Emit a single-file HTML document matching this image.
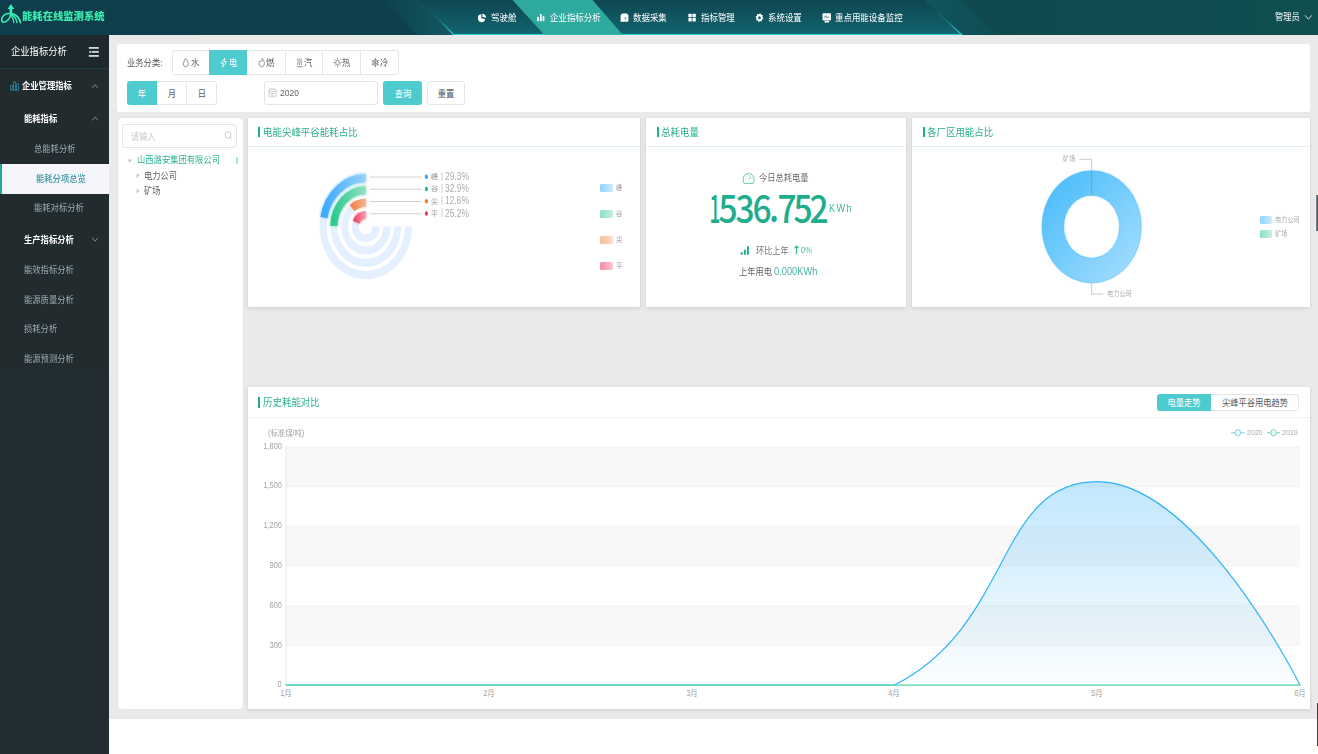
<!DOCTYPE html>
<html lang="zh-CN"><head><meta charset="utf-8"><title>能耗在线监测系统</title><style>
html,body{margin:0;padding:0}
body{width:1318px;height:754px;overflow:hidden;position:relative;background:#fff;
font-family:"Liberation Sans", "Noto Sans CJK SC", sans-serif;}
.b{position:absolute;box-sizing:border-box;display:block}
.t{position:absolute;white-space:nowrap;line-height:1;display:block}
</style></head><body>
<div class="b" style="left:109.00px;top:35.00px;width:1209.00px;height:684.00px;background:#eaeaea"></div>
<svg class="b" style="left:0.00px;top:0.00px;" width="1318.00" height="35.00" viewBox="0 0 1318.00 35.00">
<defs>
<linearGradient id="hb" x1="0" x2="1" y1="0" y2="0"><stop offset="0" stop-color="#0e3e4b"/><stop offset="0.3" stop-color="#0e404b"/><stop offset="1" stop-color="#104e50"/></linearGradient>
<linearGradient id="hc" x1="0" x2="0" y1="0" y2="1"><stop offset="0" stop-color="#0f4651" stop-opacity="1"/><stop offset="1" stop-color="#11656f"/></linearGradient>
<linearGradient id="hl" x1="0" x2="1" y1="0" y2="0"><stop offset="0" stop-color="#12616b" stop-opacity="0"/><stop offset="1" stop-color="#12616b" stop-opacity="0.75"/></linearGradient>
<linearGradient id="hr" x1="0" x2="1" y1="0" y2="0"><stop offset="0" stop-color="#12616b" stop-opacity="0.55"/><stop offset="1" stop-color="#12616b" stop-opacity="0.15"/></linearGradient>
<linearGradient id="hs" x1="0" x2="0" y1="0" y2="1"><stop offset="0" stop-color="#22c8c8" stop-opacity="0"/><stop offset="0.3" stop-color="#22c8c8" stop-opacity="0.02"/><stop offset="0.6" stop-color="#22c8c8" stop-opacity="0.22"/><stop offset="1" stop-color="#2ad6d6" stop-opacity="1"/></linearGradient>
</defs>
<rect width="1318" height="35" fill="url(#hb)"/>
<polygon points="419.3,0 924.5,0 962,35 454,35" fill="url(#hc)"/>
<polygon points="383,0 419.3,0 454,35 417.7,35" fill="url(#hl)"/>
<polygon points="924.5,0 960.5,0 998,35 962,35" fill="url(#hr)"/>
<line x1="419.3" y1="0" x2="454" y2="35" stroke="url(#hs)" stroke-width="1.3"/>
<line x1="924.5" y1="0" x2="962" y2="35" stroke="url(#hs)" stroke-width="1.3"/>
<rect x="453.5" y="33.9" width="508.5" height="1.1" fill="#2ccaca"/>
<polygon points="512.5,0 592.5,0 622.5,34.5 544,34.5" fill="#2ea99e"/>

<g fill="none" stroke="#38efb6" stroke-linecap="round">
<polygon points="10.9,3.9 14.2,8.9 7.6,8.9" fill="#38efb6" stroke="none"/>
<path d="M10.9 8 L10.9 14" stroke-width="2.6" stroke-linecap="butt"/>
<path d="M10.9 13.5 C9.8 19.5 6.5 22.2 3.8 22.2 C1.2 22.2 1 18.6 3 16.2 C5 13.8 8.5 13.4 10.9 13.6" stroke-width="1.5"/>
<path d="M11.2 13.6 C15.5 14.2 19.3 17.5 20.4 22.6" stroke-width="1.7"/>
<path d="M11.4 15.2 C14.6 16 16.4 18.8 16.9 22.6" stroke-width="1.4"/>
<path d="M11.4 16.8 C13 17.8 13.6 20 13.7 22.6" stroke-width="1.3"/>
</g>

<g fill="#fff">
<!-- pie -->
<path d="M481.3 14.2 A3.7 4 0 1 0 485.2 19.2 L481.3 18.2 Z"/>
<path d="M482.3 13.7 A3.8 4 0 0 1 486.1 17.8 L482.3 17 Z"/>
<!-- bars -->
<rect x="537.1" y="17" width="1.8" height="4.2"/><rect x="539.9" y="14" width="1.8" height="7.2"/><rect x="542.6" y="16.2" width="1.8" height="5"/>
<!-- box -->
<path d="M622 13.5 H627 L628.4 15.6 V21.8 H620.6 V15.6 Z"/>
<!-- grid -->
<rect x="688.4" y="13.8" width="3.3" height="3.5" rx="0.4"/><rect x="692.5" y="13.8" width="3.3" height="3.5" rx="0.4"/>
<rect x="688.4" y="18" width="3.3" height="3.5" rx="0.4"/><rect x="692.5" y="18" width="3.3" height="3.5" rx="0.4"/>
<!-- monitor -->
<path d="M823.3 13.2 H830.2 Q831 13.2 831 14 V19.6 Q831 20.4 830.2 20.4 H823.3 Q822.5 20.4 822.5 19.6 V14 Q822.5 13.2 823.3 13.2 Z M824.6 21 H828.9 V22.4 H824.6 Z"/>
</g>
<path d="M624.3 17.6 h0.8 v1.4 h0.8 v-1 h0.8" stroke="#19656f" stroke-width="0.5" fill="none"/>
<path d="M824 17 h1.3 l0.8 -1.4 l1 2.6 l0.8 -1.2 h1.4" stroke="#19656f" stroke-width="0.6" fill="none"/>
<polygon points="763.49,18.60 762.00,19.59 761.76,21.52 760.09,21.03 758.71,22.21 757.83,20.53 756.12,20.26 756.55,18.36 755.51,16.80 757.00,15.81 757.24,13.88 758.91,14.37 760.29,13.19 761.17,14.87 762.88,15.14 762.45,17.04" fill="#fff"/><ellipse cx="759.50" cy="17.70" rx="1.35" ry="1.5" fill="#14606b"/><path d="M1305 15.3 L1308.4 19.2 L1311.8 15.3" stroke="#dfe9ea" stroke-width="0.9" fill="none"/></svg>
<span class="t" style="top:12.25px;left:22.00px;transform-origin:0 50%;transform:scaleX(1.0450);font-size:9.90px;color:#3aeeb0;font-weight:900;">能耗在线监测系统</span>
<span class="t" style="top:13.12px;left:490.80px;transform-origin:0 50%;transform:scaleX(0.8850);font-size:9.55px;color:#fff;">驾驶舱</span>
<span class="t" style="top:13.12px;left:549.80px;transform-origin:0 50%;transform:scaleX(0.8850);font-size:9.55px;color:#fff;">企业指标分析</span>
<span class="t" style="top:13.12px;left:633.00px;transform-origin:0 50%;transform:scaleX(0.8850);font-size:9.55px;color:#fff;">数据采集</span>
<span class="t" style="top:13.12px;left:701.00px;transform-origin:0 50%;transform:scaleX(0.8850);font-size:9.55px;color:#fff;">指标管理</span>
<span class="t" style="top:13.12px;left:767.60px;transform-origin:0 50%;transform:scaleX(0.8850);font-size:9.55px;color:#fff;">系统设置</span>
<span class="t" style="top:13.12px;left:834.90px;transform-origin:0 50%;transform:scaleX(0.8850);font-size:9.55px;color:#fff;">重点用能设备监控</span>
<span class="t" style="top:13.15px;left:1274.70px;transform-origin:0 50%;transform:scaleX(0.8850);font-size:9.30px;color:#fff;">管理员</span>
<div class="b" style="left:0.00px;top:35.00px;width:109.00px;height:719.00px;background:#212d33"></div>
<div class="b" style="left:0.00px;top:68.00px;width:109.00px;height:305.00px;background:#222b2e"></div>
<div class="b" style="left:0.00px;top:35.00px;width:109.00px;height:34.00px;background:#1e292e;border-bottom:1px solid #203c45"></div>
<span class="t" style="top:46.05px;left:10.90px;transform-origin:0 50%;transform:scaleX(0.8850);font-size:10.50px;color:#fff;">企业指标分析</span>
<svg class="b" style="left:0.00px;top:0.00px;" width="109.00" height="400.00" viewBox="0 0 109.00 400.00">
<g fill="#cfd9e0">
<rect x="88.8" y="47" width="10" height="1.8"/>
<rect x="91.6" y="51" width="7.2" height="1.8"/>
<rect x="88.8" y="55" width="10" height="1.8"/>
<polygon points="88.6,51.9 90.8,50.4 90.8,53.4"/>
</g>
<g fill="none" stroke="#2c7f99" stroke-width="0.9">
<rect x="10.6" y="85.6" width="2" height="4.6"/><rect x="13.6" y="82" width="2" height="8.2"/><rect x="16.6" y="84" width="2" height="6.2"/>
</g>
<g fill="none" stroke="#848f95" stroke-width="0.9">
<path d="M92.2 88 L95.1 84.6 L98 88"/>
<path d="M92.2 120.4 L95.1 117 L98 120.4"/>
<path d="M92.2 237.8 L95.1 241.2 L98 237.8"/>
</g>
</svg>
<span class="t" style="top:81.30px;left:21.80px;transform-origin:0 50%;transform:scaleX(0.8850);font-size:9.40px;color:#fff;font-weight:700;">企业管理指标</span>
<span class="t" style="top:113.80px;left:23.60px;transform-origin:0 50%;transform:scaleX(0.8850);font-size:9.40px;color:#fff;font-weight:700;">能耗指标</span>
<span class="t" style="top:144.00px;left:34.30px;transform-origin:0 50%;transform:scaleX(0.8850);font-size:9.40px;color:#9babb5;">总能耗分析</span>
<div class="b" style="left:0.00px;top:164.00px;width:109.00px;height:30.00px;background:#f4f6fb;border-left:2px solid #26a69a"></div>
<span class="t" style="top:173.50px;left:36.40px;transform-origin:0 50%;transform:scaleX(0.8850);font-size:9.40px;color:#3d97a3;font-weight:500;">能耗分项总览</span>
<span class="t" style="top:202.90px;left:34.30px;transform-origin:0 50%;transform:scaleX(0.8850);font-size:9.40px;color:#9babb5;">能耗对标分析</span>
<span class="t" style="top:234.70px;left:23.60px;transform-origin:0 50%;transform:scaleX(0.8850);font-size:9.40px;color:#fff;font-weight:700;">生产指标分析</span>
<span class="t" style="top:265.30px;left:23.60px;transform-origin:0 50%;transform:scaleX(0.8850);font-size:9.40px;color:#9babb5;">能效指标分析</span>
<span class="t" style="top:294.70px;left:23.60px;transform-origin:0 50%;transform:scaleX(0.8850);font-size:9.40px;color:#9babb5;">能源质量分析</span>
<span class="t" style="top:324.30px;left:23.60px;transform-origin:0 50%;transform:scaleX(0.8850);font-size:9.40px;color:#9babb5;">损耗分析</span>
<span class="t" style="top:353.80px;left:23.60px;transform-origin:0 50%;transform:scaleX(0.8850);font-size:9.40px;color:#9babb5;">能源预测分析</span>
<div class="b" style="left:117.00px;top:44.00px;width:1193.00px;height:68.00px;background:#fff;border-radius:3px"></div>
<span class="t" style="top:57.70px;left:126.80px;transform-origin:0 50%;transform:scaleX(0.8850);font-size:9.40px;color:#555;">业务分类:</span>
<div class="b" style="left:172.00px;top:50.00px;width:227.00px;height:25.00px;border:1px solid #e2e5ec;border-radius:3px;background:#fff"></div>
<div class="b" style="left:209.00px;top:50.00px;width:38.00px;height:25.00px;background:#4ecbcf"></div>
<div class="b" style="left:285.00px;top:51.00px;width:1.00px;height:23.00px;background:#e2e5ec"></div>
<div class="b" style="left:322.00px;top:51.00px;width:1.00px;height:23.00px;background:#e2e5ec"></div>
<div class="b" style="left:360.00px;top:51.00px;width:1.00px;height:23.00px;background:#e2e5ec"></div>
<span class="t" style="top:58.00px;left:190.70px;transform-origin:0 50%;transform:scaleX(0.8850);font-size:9.40px;color:#5a5d63;">水</span>
<span class="t" style="top:58.00px;left:228.55px;transform-origin:0 50%;transform:scaleX(0.8850);font-size:9.40px;color:#fff;">电</span>
<span class="t" style="top:58.00px;left:266.40px;transform-origin:0 50%;transform:scaleX(0.8850);font-size:9.40px;color:#5a5d63;">燃</span>
<span class="t" style="top:58.00px;left:304.25px;transform-origin:0 50%;transform:scaleX(0.8850);font-size:9.40px;color:#5a5d63;">汽</span>
<span class="t" style="top:58.00px;left:342.10px;transform-origin:0 50%;transform:scaleX(0.8850);font-size:9.40px;color:#5a5d63;">热</span>
<span class="t" style="top:58.00px;left:379.95px;transform-origin:0 50%;transform:scaleX(0.8850);font-size:9.40px;color:#5a5d63;">冷</span>
<div class="b" style="left:127.00px;top:81.00px;width:90.00px;height:24.00px;border:1px solid #e2e5ec;border-radius:3px;background:#fff"></div>
<div class="b" style="left:127.00px;top:81.00px;width:30.00px;height:24.00px;background:#4ecbcf;border-radius:3px 0 0 3px"></div>
<div class="b" style="left:186.00px;top:82.00px;width:1.00px;height:22.00px;background:#e2e5ec"></div>
<span class="t" style="top:88.50px;left:141.93px;transform-origin:0 50%;transform:scaleX(0.8850) translateX(-50%);font-size:9.40px;color:#fff;">年</span>
<span class="t" style="top:88.50px;left:171.80px;transform-origin:0 50%;transform:scaleX(0.8850) translateX(-50%);font-size:9.40px;color:#5a5d63;">月</span>
<span class="t" style="top:88.50px;left:201.67px;transform-origin:0 50%;transform:scaleX(0.8850) translateX(-50%);font-size:9.40px;color:#5a5d63;">日</span>
<div class="b" style="left:264.00px;top:81.00px;width:114.00px;height:24.00px;border:1px solid #e2e5ec;border-radius:3px;background:#fff"></div>
<span class="t" style="top:88.40px;left:279.60px;transform-origin:0 50%;transform:scaleX(0.8850);font-size:9.60px;color:#606266;">2020</span>
<div class="b" style="left:383.00px;top:81.00px;width:39.00px;height:24.00px;background:#4ecbcf;border-radius:3px"></div>
<span class="t" style="top:89.10px;left:402.50px;transform-origin:0 50%;transform:scaleX(0.8850) translateX(-50%);font-size:9.40px;color:#fff;">查询</span>
<div class="b" style="left:427.00px;top:81.00px;width:38.00px;height:24.00px;border:1px solid #e2e5ec;border-radius:3px;background:#fff"></div>
<span class="t" style="top:89.10px;left:446.20px;transform-origin:0 50%;transform:scaleX(0.8850) translateX(-50%);font-size:9.40px;color:#4a4d52;">重置</span>
<svg class="b" style="left:0.00px;top:0.00px;" width="480.00" height="112.00" viewBox="0 0 480.00 112.00"><g fill="none" stroke="#6d7076" stroke-width="0.75" stroke-linejoin="round"><path d="M185.80 58.30 C182.60 62.10 182.90 66.80 185.80 66.80 C188.70 66.80 189.00 62.10 185.80 58.30 Z"/><path d="M262.10 58.40 C265.20 61.00 265.00 66.80 261.80 66.80 C258.60 66.80 258.40 62.40 260.20 60.80 C260.60 62.20 262.40 62.00 262.10 58.40 Z"/><path d="M297.85 58.40 q-0.9 1.1 0 2.2 q0.9 1.1 0 2.2 q-0.9 1.1 0 2.2"/><path d="M299.65 58.40 q-0.9 1.1 0 2.2 q0.9 1.1 0 2.2 q-0.9 1.1 0 2.2"/><path d="M301.45 58.40 q-0.9 1.1 0 2.2 q0.9 1.1 0 2.2 q-0.9 1.1 0 2.2"/><path d="M296.65 66.80 h6"/><ellipse cx="337.50" cy="62.60" rx="1.9" ry="2.1"/><path d="M340.07 62.60 L341.66 62.60"/><path d="M339.31 64.65 L340.44 65.92"/><path d="M337.50 65.50 L337.50 67.30"/><path d="M335.69 64.65 L334.56 65.92"/><path d="M334.93 62.60 L333.34 62.60"/><path d="M335.69 60.55 L334.56 59.28"/><path d="M337.50 59.70 L337.50 57.90"/><path d="M339.31 60.55 L340.44 59.28"/><path d="M375.35 62.60 L375.35 67.30"/><path d="M375.35 62.60 L371.75 64.95"/><path d="M375.35 62.60 L371.75 60.25"/><path d="M375.35 62.60 L375.35 57.90"/><path d="M375.35 62.60 L378.95 60.25"/><path d="M375.35 62.60 L378.95 64.95"/><ellipse cx="375.35" cy="62.60" rx="2.6" ry="2.9"/></g><path d="M224.95 58.00 L221.15 63.20 L223.55 63.20 L222.35 67.20 L226.55 61.60 L224.05 61.60 Z" fill="none" stroke="#fff" stroke-width="0.8" stroke-linejoin="round"/><g fill="none" stroke="#c0c4cc" stroke-width="0.8"><rect x="269" y="89.2" width="7.2" height="7.6" rx="0.6"/><path d="M269 91.6 h7.2 M270.9 88.2 v1.8 M274.3 88.2 v1.8 M270.6 93.4 h4 M270.6 95 h4" /></g></svg>
<div class="b" style="left:118.00px;top:118.00px;width:125.00px;height:591.00px;background:#fff;border-radius:4px;box-shadow:0 0 3px rgba(0,0,0,.06)"></div>
<div class="b" style="left:122.00px;top:124.00px;width:115.00px;height:24.00px;border:1px solid #e2e5ec;border-radius:3px;background:#fff"></div>
<span class="t" style="top:132.70px;left:130.80px;transform-origin:0 50%;transform:scaleX(0.8850);font-size:9.20px;color:#c3c7cf;">请输入</span>
<svg class="b" style="left:0.00px;top:0.00px;" width="245.00" height="200.00" viewBox="0 0 245.00 200.00">
<g fill="none" stroke="#c0c4cc" stroke-width="0.8"><ellipse cx="228" cy="135" rx="3" ry="3.4"/><path d="M230.2 137.6 L231.6 139.3"/></g>
<g fill="#c0c4cc"><polygon points="127.6,159.4 132,159.4 129.8,162.6"/><polygon points="136.6,172.9 139.3,175.6 136.6,178.3"/><polygon points="136.6,188.2 139.3,190.9 136.6,193.6"/></g>
<rect x="236.4" y="157" width="1.3" height="7" fill="#7fd6bd"/>
</svg>
<span class="t" style="top:155.10px;left:137.00px;transform-origin:0 50%;transform:scaleX(0.8850);font-size:9.40px;color:#2fb392;">山西潞安集团有限公司</span>
<span class="t" style="top:172.45px;left:144.20px;transform-origin:0 50%;transform:scaleX(0.8850);font-size:9.30px;color:#606266;">电力公司</span>
<span class="t" style="top:187.35px;left:144.20px;transform-origin:0 50%;transform:scaleX(0.8850);font-size:9.30px;color:#606266;">矿场</span>
<div class="b" style="left:248.00px;top:118.00px;width:392.00px;height:189.00px;background:#fff;box-shadow:0 1px 4px rgba(0,0,0,.13)"></div>
<div class="b" style="left:258.00px;top:127.00px;width:2.00px;height:10.00px;background:#1fae8c"></div>
<span class="t" style="top:126.75px;left:262.90px;transform-origin:0 50%;transform:scaleX(0.8850);font-size:10.70px;color:#2bb092;">电能尖峰平谷能耗占比</span>
<div class="b" style="left:248.00px;top:146.00px;width:392.00px;height:1.00px;background:#dff2f0"></div>
<div class="b" style="left:646.00px;top:118.00px;width:260.00px;height:189.00px;background:#fff;box-shadow:0 1px 4px rgba(0,0,0,.13)"></div>
<div class="b" style="left:657.00px;top:127.00px;width:2.00px;height:10.00px;background:#1fae8c"></div>
<span class="t" style="top:126.75px;left:661.40px;transform-origin:0 50%;transform:scaleX(0.8850);font-size:10.70px;color:#2bb092;">总耗电量</span>
<div class="b" style="left:646.00px;top:146.00px;width:260.00px;height:1.00px;background:#dff2f0"></div>
<div class="b" style="left:912.00px;top:118.00px;width:398.00px;height:189.00px;background:#fff;box-shadow:0 1px 4px rgba(0,0,0,.13)"></div>
<div class="b" style="left:923.00px;top:127.00px;width:2.00px;height:10.00px;background:#1fae8c"></div>
<span class="t" style="top:126.75px;left:927.30px;transform-origin:0 50%;transform:scaleX(0.8850);font-size:10.70px;color:#2bb092;">各厂区用能占比</span>
<div class="b" style="left:912.00px;top:146.00px;width:398.00px;height:1.00px;background:#dff2f0"></div>
<svg class="b" style="left:0.00px;top:0.00px;" width="640.00" height="300.00" viewBox="0 0 640.00 300.00"><defs><filter id="gl" x="-30%" y="-30%" width="160%" height="160%"><feGaussianBlur stdDeviation="1.6"/></filter><linearGradient id="rg0" gradientUnits="userSpaceOnUse" x1="-50.00" y1="0" x2="0" y2="0"><stop offset="0" stop-color="#3ba9f9"/><stop offset="1" stop-color="#97d4fc"/></linearGradient><linearGradient id="rg1" gradientUnits="userSpaceOnUse" x1="-38.00" y1="0" x2="0" y2="0"><stop offset="0" stop-color="#2bc88b"/><stop offset="1" stop-color="#93e2c4"/></linearGradient><linearGradient id="rg2" gradientUnits="userSpaceOnUse" x1="-17.00" y1="0" x2="0" y2="0"><stop offset="0" stop-color="#ef8045"/><stop offset="1" stop-color="#f4b691"/></linearGradient><linearGradient id="rg3" gradientUnits="userSpaceOnUse" x1="-13.00" y1="0" x2="0" y2="0"><stop offset="0" stop-color="#ee4565"/><stop offset="1" stop-color="#f7a3b6"/></linearGradient></defs><g transform="translate(365.80 226.60) scale(0.878 1)" fill="none"><path d="M-0.00 -48.55 A48.55 48.55 0 1 0 48.55 0.00" stroke="#e4f0ff" stroke-width="8.10"/><path d="M-0.00 -36.30 A36.30 36.30 0 1 0 36.30 0.00" stroke="#e4f0ff" stroke-width="8.10"/><path d="M-0.00 -24.05 A24.05 24.05 0 1 0 24.05 0.00" stroke="#e4f0ff" stroke-width="8.10"/><path d="M-0.00 -11.80 A11.80 11.80 0 1 0 11.80 0.00" stroke="#e4f0ff" stroke-width="8.10"/><path d="M-0.00 -48.55 A48.55 48.55 0 0 0 -47.67 -9.18" stroke="#3ba9f9" stroke-width="9.10" opacity="0.55" filter="url(#gl)"/><path d="M-0.00 -48.55 A48.55 48.55 0 0 0 -47.67 -9.18" stroke="url(#rg0)" stroke-width="8.10"/><path d="M-0.00 -36.30 A36.30 36.30 0 0 0 -36.29 -0.76" stroke="#2bc88b" stroke-width="9.10" opacity="0.55" filter="url(#gl)"/><path d="M-0.00 -36.30 A36.30 36.30 0 0 0 -36.29 -0.76" stroke="url(#rg1)" stroke-width="8.10"/><path d="M-0.00 -24.05 A24.05 24.05 0 0 0 -15.46 -18.42" stroke="#ef8045" stroke-width="9.10" opacity="0.55" filter="url(#gl)"/><path d="M-0.00 -24.05 A24.05 24.05 0 0 0 -15.46 -18.42" stroke="url(#rg2)" stroke-width="8.10"/><path d="M-0.00 -11.80 A11.80 11.80 0 0 0 -10.94 -4.42" stroke="#ee4565" stroke-width="9.10" opacity="0.55" filter="url(#gl)"/><path d="M-0.00 -11.80 A11.80 11.80 0 0 0 -10.94 -4.42" stroke="url(#rg3)" stroke-width="8.10"/></g><path d="M369.6 177.00 H421.4" stroke="#cbcbcb" stroke-width="0.9"/><ellipse cx="426.4" cy="176.70" rx="1.55" ry="2.2" fill="#2d9ff5"/><path d="M369.6 189.25 H421.4" stroke="#cbcbcb" stroke-width="0.9"/><ellipse cx="426.4" cy="188.95" rx="1.55" ry="2.2" fill="#19be7b"/><path d="M369.6 201.50 H421.4" stroke="#cbcbcb" stroke-width="0.9"/><ellipse cx="426.4" cy="201.20" rx="1.55" ry="2.2" fill="#f5772d"/><path d="M369.6 213.75 H421.4" stroke="#cbcbcb" stroke-width="0.9"/><ellipse cx="426.4" cy="213.45" rx="1.55" ry="2.2" fill="#f0324f"/></svg>
<span class="t" style="top:173.00px;left:430.80px;transform-origin:0 50%;transform:scaleX(1.0000);font-size:7.40px;color:#9a9a9a;">峰</span>
<span class="t" style="top:171.50px;left:440.60px;transform-origin:0 50%;transform:scaleX(0.8850);font-size:9.00px;color:#bdbdbd;">|</span>
<span class="t" style="top:171.20px;left:445.20px;transform-origin:0 50%;transform:scaleX(0.7800);font-size:10.80px;color:#acacac;">29.3%</span>
<span class="t" style="top:185.25px;left:430.80px;transform-origin:0 50%;transform:scaleX(1.0000);font-size:7.40px;color:#9a9a9a;">谷</span>
<span class="t" style="top:183.75px;left:440.60px;transform-origin:0 50%;transform:scaleX(0.8850);font-size:9.00px;color:#bdbdbd;">|</span>
<span class="t" style="top:182.65px;left:445.20px;transform-origin:0 50%;transform:scaleX(0.7800);font-size:10.80px;color:#acacac;">32.9%</span>
<span class="t" style="top:197.50px;left:430.80px;transform-origin:0 50%;transform:scaleX(1.0000);font-size:7.40px;color:#9a9a9a;">尖</span>
<span class="t" style="top:196.00px;left:440.60px;transform-origin:0 50%;transform:scaleX(0.8850);font-size:9.00px;color:#bdbdbd;">|</span>
<span class="t" style="top:194.90px;left:445.20px;transform-origin:0 50%;transform:scaleX(0.7800);font-size:10.80px;color:#acacac;">12.6%</span>
<span class="t" style="top:209.75px;left:430.80px;transform-origin:0 50%;transform:scaleX(1.0000);font-size:7.40px;color:#9a9a9a;">平</span>
<span class="t" style="top:208.25px;left:440.60px;transform-origin:0 50%;transform:scaleX(0.8850);font-size:9.00px;color:#bdbdbd;">|</span>
<span class="t" style="top:207.70px;left:445.20px;transform-origin:0 50%;transform:scaleX(0.7800);font-size:10.80px;color:#acacac;">25.2%</span>
<div class="b" style="left:600.00px;top:184.00px;width:13.00px;height:8.00px;border-radius:1.5px;background:linear-gradient(90deg,#8fd3fc,#cdeafe)"></div>
<span class="t" style="top:183.85px;left:615.60px;transform-origin:0 50%;transform:scaleX(0.8850);font-size:7.20px;color:#999;">峰</span>
<div class="b" style="left:600.00px;top:210.00px;width:13.00px;height:8.00px;border-radius:1.5px;background:linear-gradient(90deg,#8adfbd,#c9efdf)"></div>
<span class="t" style="top:209.78px;left:615.60px;transform-origin:0 50%;transform:scaleX(0.8850);font-size:7.20px;color:#999;">谷</span>
<div class="b" style="left:600.00px;top:236.00px;width:13.00px;height:8.00px;border-radius:1.5px;background:linear-gradient(90deg,#fbba95,#fddfcd)"></div>
<span class="t" style="top:235.71px;left:615.60px;transform-origin:0 50%;transform:scaleX(0.8850);font-size:7.20px;color:#999;">尖</span>
<div class="b" style="left:600.00px;top:262.00px;width:13.00px;height:8.00px;border-radius:1.5px;background:linear-gradient(90deg,#f98aa2,#fcc6d2)"></div>
<span class="t" style="top:261.64px;left:615.60px;transform-origin:0 50%;transform:scaleX(0.8850);font-size:7.20px;color:#999;">平</span>
<svg class="b" style="left:0.00px;top:0.00px;" width="906.00" height="300.00" viewBox="0 0 906.00 300.00">
<g fill="none" stroke="#3dbb9c" stroke-width="0.8">
<path d="M744.2 183.3 C741.6 179.6 743.6 173.6 748.6 173.6 C753.6 173.6 755.6 179.6 753 183.3 Z"/>
<path d="M748.4 179.4 L750.6 176.6"/>
<path d="M745 178.6 h0.9 M751.4 178.6 h0.9 M748.6 175 v0.9 M746 176.2 l0.6 0.6" stroke-width="0.7"/>
</g>
<g fill="#1fae8c"><rect x="740.8" y="252.2" width="1.9" height="2.6"/><rect x="743.9" y="249.6" width="1.9" height="5.2"/><rect x="747" y="246.2" width="1.9" height="8.6"/></g>
</svg>
<span class="t" style="top:174.03px;left:759.20px;transform-origin:0 50%;transform:scaleX(0.8850);font-size:9.35px;color:#6a6a6a;">今日总耗电量</span>
<div class="b" style="left:0;top:0"><span class="t" style="top:187.70px;left:715.00px;transform-origin:0 50%;transform:scaleX(0.5000) translateX(-50%);font-size:38.20px;color:#1fae8c;font-weight:500;font-family:'Noto Sans CJK SC',sans-serif;">1</span><span class="t" style="top:187.70px;left:728.40px;transform-origin:0 50%;transform:scaleX(0.8800) translateX(-50%);font-size:38.20px;color:#1fae8c;font-weight:500;font-family:'Noto Sans CJK SC',sans-serif;">5</span><span class="t" style="top:187.70px;left:745.00px;transform-origin:0 50%;transform:scaleX(0.8800) translateX(-50%);font-size:38.20px;color:#1fae8c;font-weight:500;font-family:'Noto Sans CJK SC',sans-serif;">3</span><span class="t" style="top:187.70px;left:761.90px;transform-origin:0 50%;transform:scaleX(0.8800) translateX(-50%);font-size:38.20px;color:#1fae8c;font-weight:500;font-family:'Noto Sans CJK SC',sans-serif;">6</span><span class="t" style="top:187.20px;left:773.80px;transform-origin:0 50%;transform:scaleX(0.8800) translateX(-50%);font-size:38.20px;color:#1fae8c;font-weight:500;font-family:'Noto Sans CJK SC',sans-serif;">.</span><span class="t" style="top:187.70px;left:786.50px;transform-origin:0 50%;transform:scaleX(0.8800) translateX(-50%);font-size:38.20px;color:#1fae8c;font-weight:500;font-family:'Noto Sans CJK SC',sans-serif;">7</span><span class="t" style="top:187.70px;left:803.10px;transform-origin:0 50%;transform:scaleX(0.8800) translateX(-50%);font-size:38.20px;color:#1fae8c;font-weight:500;font-family:'Noto Sans CJK SC',sans-serif;">5</span><span class="t" style="top:187.70px;left:819.00px;transform-origin:0 50%;transform:scaleX(0.8800) translateX(-50%);font-size:38.20px;color:#1fae8c;font-weight:500;font-family:'Noto Sans CJK SC',sans-serif;">2</span></div>
<span class="t" style="top:203.85px;left:829.40px;transform-origin:0 50%;transform:scaleX(0.8850);font-size:10.30px;color:#41b9a1;letter-spacing:1.6px">KWh</span>
<span class="t" style="top:246.90px;left:756.00px;transform-origin:0 50%;transform:scaleX(0.8850);font-size:9.20px;color:#777;">环比上年</span>
<span class="t" style="top:244.70px;left:792.40px;transform-origin:0 50%;transform:scaleX(0.9500);font-size:11.60px;color:#41b9a1;font-weight:700;font-family:'DejaVu Sans',sans-serif;">↑</span>
<span class="t" style="top:245.55px;left:801.40px;transform-origin:0 50%;transform:scaleX(0.8000);font-size:9.30px;color:#41b9a1;">0%</span>
<span class="t" style="top:267.85px;left:738.80px;transform-origin:0 50%;transform:scaleX(0.8850);font-size:9.30px;color:#666;">上年用电</span>
<span class="t" style="top:265.55px;left:774.40px;transform-origin:0 50%;transform:scaleX(0.8850);font-size:10.50px;color:#45b5a5;">0.000KWh</span>
<svg class="b" style="left:0.00px;top:0.00px;" width="1318.00" height="300.00" viewBox="0 0 1318.00 300.00">
<defs>
<linearGradient id="dg" x1="0.1" y1="0.1" x2="0.9" y2="0.9"><stop offset="0" stop-color="#4dbdfb"/><stop offset="1" stop-color="#9fdcfd"/></linearGradient>
<filter id="dgl" x="-20%" y="-20%" width="140%" height="140%"><feGaussianBlur stdDeviation="1.3"/></filter>
</defs>
<path d="M1042.05 226.75 a49.6 56 0 1 0 99.2 0 a49.6 56 0 1 0 -99.2 0 Z M1063.65 226.75 a28 31.5 0 1 0 56 0 a28 31.5 0 1 0 -56 0 Z" fill="#5cc0fa" fill-rule="evenodd" opacity="0.6" filter="url(#dgl)"/>
<path d="M1042.05 226.75 a49.6 56 0 1 0 99.2 0 a49.6 56 0 1 0 -99.2 0 Z M1063.65 226.75 a28 31.5 0 1 0 56 0 a28 31.5 0 1 0 -56 0 Z" fill="url(#dg)" fill-rule="evenodd" stroke="#48b4f9" stroke-width="0.6" stroke-opacity="0.7"/>
<path d="M1091.65 170.8 V195.3" stroke="#2fc98a" stroke-width="0.9"/>
<path d="M1079.3 159.3 H1091.65 V170.6 M1091.65 282.8 V294 H1103" fill="none" stroke="#bdbdbd" stroke-width="0.8"/>
</svg>
<span class="t" style="top:154.80px;left:1063.20px;transform-origin:0 50%;transform:scaleX(0.8850);font-size:7.00px;color:#a8a8a8;">矿场</span>
<span class="t" style="top:289.90px;left:1106.70px;transform-origin:0 50%;transform:scaleX(0.8850);font-size:7.00px;color:#a8a8a8;">电力公司</span>
<div class="b" style="left:1260.00px;top:216.00px;width:12.00px;height:8.00px;border-radius:1.5px;background:linear-gradient(90deg,#8fd3fc,#cdeafe)"></div>
<div class="b" style="left:1260.00px;top:230.00px;width:12.00px;height:8.00px;border-radius:1.5px;background:linear-gradient(90deg,#8adfbd,#c9efdf)"></div>
<span class="t" style="top:215.80px;left:1274.80px;transform-origin:0 50%;transform:scaleX(0.8850);font-size:7.00px;color:#a8a8a8;">电力公司</span>
<span class="t" style="top:229.80px;left:1274.80px;transform-origin:0 50%;transform:scaleX(0.8850);font-size:7.00px;color:#a8a8a8;">矿场</span>
<div class="b" style="left:248.00px;top:387.00px;width:1062.00px;height:322.00px;background:#fff;box-shadow:0 1px 4px rgba(0,0,0,.13)"></div>
<div class="b" style="left:258.00px;top:397.00px;width:2.00px;height:11.00px;background:#1fae8c"></div>
<span class="t" style="top:397.05px;left:262.90px;transform-origin:0 50%;transform:scaleX(0.8850);font-size:10.70px;color:#2bb092;">历史耗能对比</span>
<div class="b" style="left:248.00px;top:417.00px;width:1062.00px;height:1.00px;background:#e6f4f2"></div>
<div class="b" style="left:1157.00px;top:394.00px;width:54.00px;height:17.00px;background:#4ecbcf;border-radius:3px 0 0 3px"></div>
<div class="b" style="left:1211.00px;top:394.00px;width:88.00px;height:17.00px;border:1px solid #e2e5ec;border-left:none;border-radius:0 3px 3px 0;background:#fff"></div>
<span class="t" style="top:398.82px;left:1184.20px;transform-origin:0 50%;transform:scaleX(0.8850) translateX(-50%);font-size:9.35px;color:#fff;">电量走势</span>
<span class="t" style="top:399.02px;left:1255.00px;transform-origin:0 50%;transform:scaleX(0.8850) translateX(-50%);font-size:9.35px;color:#5a5d63;">尖峰平谷用电趋势</span>
<svg class="b" style="left:0.00px;top:0.00px;" width="1318.00" height="720.00" viewBox="0 0 1318.00 720.00"><defs><linearGradient id="ar" x1="0" y1="0" x2="0" y2="1"><stop offset="0" stop-color="#6cc6fb" stop-opacity="0.42"/><stop offset="1" stop-color="#6cc6fb" stop-opacity="0.02"/></linearGradient></defs><rect x="286.00" y="446.90" width="1014.00" height="39.68" fill="#f8f8f8"/><rect x="286.00" y="526.27" width="1014.00" height="39.68" fill="#f8f8f8"/><rect x="286.00" y="605.63" width="1014.00" height="39.68" fill="#f8f8f8"/><path d="M286.00 446.90 H1300.00" stroke="#f0f0f0" stroke-width="0.7"/><path d="M286.00 486.58 H1300.00" stroke="#f0f0f0" stroke-width="0.7"/><path d="M286.00 526.27 H1300.00" stroke="#f0f0f0" stroke-width="0.7"/><path d="M286.00 565.95 H1300.00" stroke="#f0f0f0" stroke-width="0.7"/><path d="M286.00 605.63 H1300.00" stroke="#f0f0f0" stroke-width="0.7"/><path d="M286.00 645.32 H1300.00" stroke="#f0f0f0" stroke-width="0.7"/><path d="M286.00 446.90 V685.00" stroke="#d3eee9" stroke-width="0.9"/><path d="M894.40 685.00 C1013.26 625.43 995.80 481.72 1097.20 481.72 C1198.60 481.72 1300.00 685.00 1300.00 685.00 Z" fill="url(#ar)"/><path d="M286.00 685.00 H894.40 C1013.26 625.43 995.80 481.72 1097.20 481.72 C1198.60 481.72 1300.00 685.00 1300.00 685.00" fill="none" stroke="#31b4f6" stroke-width="1.2"/><path d="M285.50 685.00 H1300.50" stroke="#4bd6a6" stroke-width="1.25"/><path d="M1231.1 432.75 H1244.6" stroke="#7ccafa" stroke-width="1"/><ellipse cx="1237.9" cy="432.75" rx="2.7" ry="3.1" fill="#fff" stroke="#7ccafa" stroke-width="1"/><path d="M1267 432.75 H1280" stroke="#62dcab" stroke-width="1"/><ellipse cx="1273.6" cy="432.75" rx="2.7" ry="3.1" fill="#fff" stroke="#62dcab" stroke-width="1"/></svg>
<span class="t" style="top:428.80px;left:1247.00px;transform-origin:0 50%;transform:scaleX(0.8850);font-size:8.00px;color:#aaa;">2020</span>
<span class="t" style="top:428.80px;left:1282.40px;transform-origin:0 50%;transform:scaleX(0.8850);font-size:8.00px;color:#aaa;">2019</span>
<span class="t" style="top:428.95px;left:267.60px;transform-origin:0 50%;transform:scaleX(0.8850);font-size:8.30px;color:#a4a4a4;">(标准煤/吨)</span>
<span class="t" style="top:442.10px;right:1036.10px;transform-origin:100% 50%;transform:scaleX(0.8850);font-size:8.40px;color:#a4a4a4;">1,800</span>
<span class="t" style="top:481.26px;right:1036.10px;transform-origin:100% 50%;transform:scaleX(0.8850);font-size:8.40px;color:#a4a4a4;">1,500</span>
<span class="t" style="top:521.47px;right:1036.10px;transform-origin:100% 50%;transform:scaleX(0.8850);font-size:8.40px;color:#a4a4a4;">1,200</span>
<span class="t" style="top:561.15px;right:1036.10px;transform-origin:100% 50%;transform:scaleX(0.8850);font-size:8.40px;color:#a4a4a4;">900</span>
<span class="t" style="top:600.83px;right:1036.10px;transform-origin:100% 50%;transform:scaleX(0.8850);font-size:8.40px;color:#a4a4a4;">600</span>
<span class="t" style="top:640.52px;right:1036.10px;transform-origin:100% 50%;transform:scaleX(0.8850);font-size:8.40px;color:#a4a4a4;">300</span>
<span class="t" style="top:680.20px;right:1036.10px;transform-origin:100% 50%;transform:scaleX(0.8850);font-size:8.40px;color:#a4a4a4;">0</span>
<span class="t" style="top:689.25px;left:286.00px;transform-origin:0 50%;transform:scaleX(0.8850) translateX(-50%);font-size:8.30px;color:#a4a4a4;">1月</span>
<span class="t" style="top:689.25px;left:488.80px;transform-origin:0 50%;transform:scaleX(0.8850) translateX(-50%);font-size:8.30px;color:#a4a4a4;">2月</span>
<span class="t" style="top:689.25px;left:691.60px;transform-origin:0 50%;transform:scaleX(0.8850) translateX(-50%);font-size:8.30px;color:#a4a4a4;">3月</span>
<span class="t" style="top:689.25px;left:894.40px;transform-origin:0 50%;transform:scaleX(0.8850) translateX(-50%);font-size:8.30px;color:#a4a4a4;">4月</span>
<span class="t" style="top:689.25px;left:1097.20px;transform-origin:0 50%;transform:scaleX(0.8850) translateX(-50%);font-size:8.30px;color:#a4a4a4;">5月</span>
<span class="t" style="top:689.25px;left:1300.00px;transform-origin:0 50%;transform:scaleX(0.8850) translateX(-50%);font-size:8.30px;color:#a4a4a4;">6月</span>
<div class="b" style="left:1316.00px;top:195.00px;width:2.00px;height:36.00px;background:linear-gradient(90deg,#8d979c,#36444c)"></div>
<div class="b" style="left:1317.00px;top:703.00px;width:1.00px;height:43.00px;background:#4d4030"></div>
</body></html>
